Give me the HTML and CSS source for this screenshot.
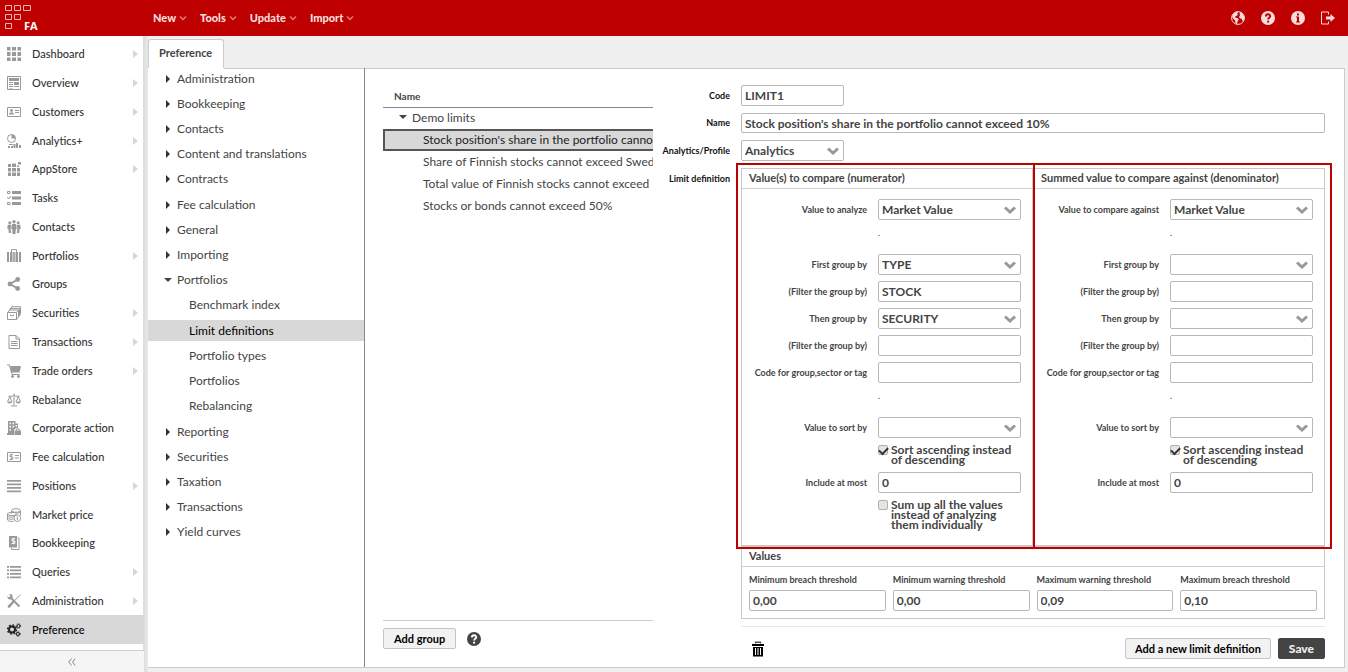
FILE: index.html
```html
<!DOCTYPE html>
<html lang="en">
<head>
<meta charset="utf-8">
<title>FA - Preference</title>
<link rel="stylesheet" href="styles.css">
</head>
<body>
<svg class="defs" aria-hidden="true">
  <symbol id="chev" viewBox="0 0 12 8"><path d="M1 1.5 6 6 11 1.5" fill="none" stroke="currentColor" stroke-width="3"/></symbol>
  <symbol id="thin" viewBox="0 0 8 6"><path d="M1 1.5 4 4.5 7 1.5" fill="none" stroke="currentColor" stroke-width="1.5"/></symbol>
  <symbol id="help" viewBox="0 0 14 14"><circle cx="7" cy="7" r="7" fill="currentColor"/><path class="cut" d="M4.9 5.4C4.9 2.6 9.2 2.7 9.2 5.2 9.2 6.8 7.1 6.8 7.1 8.6" fill="none" stroke-width="1.9"/><circle class="cutfill" cx="7.1" cy="10.7" r="1.1"/></symbol>
</svg>
<header class="topbar">
  <svg class="logo" viewBox="0 0 36 28" role="img" aria-label="FA"><g fill="none" stroke="#efb4b4"><path d="M.5 1.5h6v5h-6zM9.500 1.500h6v5h-6zM18.500 1.500h7v5h-7zM.5 10.500h6v5h-6zM9.500 10.500h6v5h-6zM.5 19.500h6v5h-6z"/></g><text x="19" y="26">FA</text></svg>
  <nav class="menus">
    <button>New <svg><use href="#thin"/></svg></button>
    <button>Tools <svg><use href="#thin"/></svg></button>
    <button>Update <svg><use href="#thin"/></svg></button>
    <button>Import <svg><use href="#thin"/></svg></button>
  </nav>
  <div class="tools">
    <button aria-label="Language"><svg viewBox="0 0 14 14"><circle cx="7" cy="7" r="6.400" fill="none" stroke="currentColor"/><path fill="currentColor" d="M1 5 3 2l3-1.500 1.500.8L6 2.500l1 1L5.500 5 4 5.500l.5 1.200L6.500 7l1.300 1.500L6.500 10.500l-.5 2.700-1.500-1-.5-3L2 7.500zM8.500 2 10 1l2 2 1.500 3-.5 3.500-1.500.5-.8-2.200L9 7.500 8 6l1-1.700z"/></svg></button>
    <button aria-label="Help"><svg><use href="#help"/></svg></button>
    <button aria-label="Information"><svg viewBox="0 0 14 14"><circle cx="7" cy="7" r="7" fill="currentColor"/><path fill="#be0000" d="M6 2.500h2v2H6zM5 5.500h3v5h1v1H5v-1h1v-4H5z"/></svg></button>
    <button aria-label="Log out"><svg viewBox="0 0 14 14"><path d="M7.500 3.500V1h-7v12h7v-2.500" fill="none" stroke="currentColor"/><path d="M5 5.500h4.500V3L14 7l-4.500 4V8.500H5z" fill="currentColor"/></svg></button>
  </div>
</header>
<div class="shell">
  <aside class="sidebar">
    <nav class="nav">
      <a class="more" href="#"><svg viewBox="0 0 14 14"><path d="M0 0h3.500v3.500H0zM5 0h4v3.500H5zM10.500 0H14v3.500h-3.500zM0 5h3.500v4H0zM5 5h4v4H5zM10.500 5H14v4h-3.500zM0 10.500h3.500V14H0zM5 10.500h4V14H5zM10.500 10.500H14V14h-3.500z"/></svg>Dashboard</a>
      <a class="more" href="#"><svg viewBox="0 0 14 14"><path class="ln" d="M.5.5h13v13H.5z"/><path d="M2 2h10v3H2zM2 6h4v1H2zM7 6h5v3H7zM2 8h4v1H2zM2 10h4v1H2zM7 10h5v1H7zM2 12h4v.6H2z"/></svg>Overview</a>
      <a class="more" href="#"><svg viewBox="0 0 14 14"><path class="ln" d="M.5 2.500h13v9H.5z"/><circle cx="4.500" cy="5.500" r="1.400"/><path d="M2 9.500c0-3 5-3 5 0zM8 5h4v1H8zM8 7h4v1H8z"/></svg>Customers</a>
      <a class="more" href="#"><svg viewBox="0 0 14 14"><circle class="ln" cx="4.500" cy="4.500" r="4"/><path d="M4.500 4.500V.5a4 4 0 0 1 4 4zM1 12h2v2H1zM4 12h2v2H4zM6.500 10h2v4h-2zM9 9h2v5H9zM12 11h2v3h-2zM2 10h4v1H2z"/></svg>Analytics+</a>
      <a class="more" href="#"><svg viewBox="0 0 14 14"><path d="M1 2h3v3H1zM5 1.500h4V5H5zM11 0h3v2.500h-3zM1 6h3v3.500H1zM5 6h4v3.500H5zM10 6h3v3.500h-3zM1 10.500h3V14H1zM5 10.500h4V14H5zM10 10.500h3V14h-3zM10 3.500h2V5h-2z"/></svg>AppStore</a>
      <a href="#"><svg viewBox="0 0 14 14"><path d="M5 0h9v3H5zM5 5.500h9v3H5zM5 11h9v3H5z"/><path class="ln" d="M.5.5h2.500v2H.5zM.5 11.500h2.500v2H.5zM.5 6l1 2 2.500-3"/></svg>Tasks</a>
      <a href="#"><svg viewBox="0 0 14 14"><circle cx="7" cy="1.700" r="1.700"/><circle cx="2.800" cy="2.700" r="1.500"/><circle cx="11.200" cy="2.700" r="1.500"/><path d="M5 4h4l.8 5-1 .3L8.500 14h-3l-.3-4.700-1-.3zM.8 4.700h3.400L3.600 9l.6 4H1.800l-.4-4-1.200-.4zM9.800 4.700h3.400l.6 4-1.200.3-.4 4H9.800l.6-4z"/></svg>Contacts</a>
      <a class="more" href="#"><svg viewBox="0 0 14 14"><path class="ln" d="M4.500 3V.6h5V3"/><path d="M0 3h2v10H0zM3 3h2.500v10H3zM6.200 3h1.600v10H6.200zM8.500 3H11v10H8.500zM12 3h2v10h-2z"/></svg>Portfolios</a>
      <a href="#"><svg viewBox="0 0 14 14"><circle cx="10.700" cy="2.500" r="2.400"/><circle cx="3" cy="7" r="2.400"/><circle cx="10.700" cy="11.500" r="2.400"/><path class="ln thick" d="M10.700 2.500 3 7l7.700 4.500"/></svg>Groups</a>
      <a class="more" href="#"><svg viewBox="0 0 14 14"><path class="ln" d="M.5 6.500h9v7h-9zM.5 6.500 3 4h8.500v7L9.500 13.500M9.500 6.500l2-2.500M3 4V2.500h8.500l1.200-.2v6.500M4.500 2.500V.7H13.500v7M3.500 8.500v1.200h3V8.500"/><path d="m11.500 4 2-3v8l-2 2.500z"/></svg>Securities</a>
      <a class="more" href="#"><svg viewBox="0 0 14 14"><path class="ln" d="M2 .5h7l3.500 3.500v9.500H2zM9 .5V4h3.500"/><path d="M4 6h6.500v1H4zM4 8h6.500v1H4zM4 10h6.500v1H4z"/></svg>Transactions</a>
      <a class="more" href="#"><svg viewBox="0 0 14 14"><path d="M3 2h11l-1.500 6.500H4.500z"/><path class="ln" d="M0 .8h2.300L5 10.500h7.500"/><circle cx="5.500" cy="12.500" r="1.400"/><circle cx="11.500" cy="12.500" r="1.400"/></svg>Trade orders</a>
      <a href="#"><svg viewBox="0 0 14 14"><path class="ln" d="M7 .5v12M1.500 3.200h4L7 2l1.500 1.200h4M2.800 3.500.7 8.500M2.800 3.500l2 5M11.200 3.500l-2 5M11.200 3.500l2.100 5"/><path d="M0 8.500h5.500C5 11 .5 11 0 8.500zM8.500 8.500H14c-.5 2.500-5 2.500-5.500 0zM4 12.500h6v1H4z"/></svg>Rebalance</a>
      <a href="#"><svg viewBox="0 0 14 14"><path fill-rule="evenodd" d="M1 13V0h7.500v2.500H11V7H8.500v1.500H7V13zM2.500 1.500v1.700H4V1.500zM5.500 1.500v1.700H7V1.500zM2.500 4.700v1.700H4V4.700zM5.500 4.700v1.700H7V4.700zM2.500 8v1.500H4V8zM8.500 4v1.500H10V4z"/><path d="M0 12h7v2H0zM7.500 9.500h6.500V14H7.500z"/><path class="ln" d="M9.500 9.500V8h2.700v1.500"/></svg>Corporate action</a>
      <a href="#"><svg viewBox="0 0 14 14"><path class="ln" d="M.5 2.500h13v9H.5z"/><path d="M8 5h4v1H8zM8 7.500h4v1H8z"/><text x="2" y="10">$</text></svg>Fee calculation</a>
      <a class="more" href="#"><svg viewBox="0 0 14 14"><path d="M0 1h14v1.700H0zM0 4.500h14v1.700H0zM0 8h14v1.700H0zM0 11.500h14v1.700H0z"/></svg>Positions</a>
      <a href="#"><svg viewBox="0 0 14 14"><g class="ln"><ellipse cx="9" cy="2.500" rx="4.500" ry="1.800"/><path d="M4.500 2.500v3M13.500 2.500v5"/><ellipse cx="5" cy="6" rx="4.500" ry="1.600"/><path d="M.5 6v6c1 1.500 4.500 1.700 6 1.200M.5 8c1 1.400 5 1.500 6.500.8M.5 10c1 1.400 4.500 1.500 6 1M9.500 5c2 0 3.500-.5 4-1.200"/><circle cx="10.300" cy="10.200" r="3.300"/><path d="M10.300 8.500v3.500"/></g></svg>Market price</a>
      <a href="#"><svg viewBox="0 0 14 14"><path d="M2 0h8v11.500H2z"/><path class="ln" d="M10.500 2h1.500v11.500H4.500V12"/><text class="inv" x="4" y="8">$</text></svg>Bookkeeping</a>
      <a class="more" href="#"><svg viewBox="0 0 14 14"><path d="M0 1h2v1.700H0zM3 1h11v1.700H3zM0 4.500h2v1.700H0zM3 4.500h11v1.700H3zM0 8h2v1.700H0zM3 8h11v1.700H3zM0 11.500h2v1.700H0zM3 11.500h11v1.700H3z"/></svg>Queries</a>
      <a class="more" href="#"><svg viewBox="0 0 14 14"><path class="ln thick" d="M3.500 3.500 12.500 12.500"/><path class="ln" d="M13.500.8 7 7.200"/><path d="M0 2 2 3.500 3.500 2 2 0c3-.3 4 1.500 3.500 3.500S2.500 6 1 4.800zM6 6.500l1.500 1.500-4.500 5.500c-1.500 1-3-.5-2-2z"/></svg>Administration</a>
      <a class="active" href="#" aria-current="page"><svg viewBox="0 0 14 14"><circle class="ln cog" cx="5" cy="6.500" r="3"/><circle class="ln cogt" cx="5" cy="6.500" r="4.500"/><circle class="ln sm" cx="11.500" cy="3" r="1.500"/><circle class="ln smt" cx="11.500" cy="3" r="2.200"/><circle class="ln sm" cx="11" cy="11" r="1.500"/><circle class="ln smt" cx="11" cy="11" r="2.200"/></svg>Preference</a>
    </nav>
    <button class="collapse" aria-label="Collapse menu"><svg viewBox="0 0 8 8"><path d="M3.500.5.8 4l2.700 3.500M7.200.5 4.500 4l2.700 3.500" fill="none" stroke="#888"/></svg></button>
  </aside>
  <main class="main">
    <div class="tabs"><button class="tab">Preference</button></div>
    <div class="content">
      <ul class="tree">
        <li class="closed"><a href="#">Administration</a></li>
        <li class="closed"><a href="#">Bookkeeping</a></li>
        <li class="closed"><a href="#">Contacts</a></li>
        <li class="closed"><a href="#">Content and translations</a></li>
        <li class="closed"><a href="#">Contracts</a></li>
        <li class="closed"><a href="#">Fee calculation</a></li>
        <li class="closed"><a href="#">General</a></li>
        <li class="closed"><a href="#">Importing</a></li>
        <li class="open"><a href="#">Portfolios</a></li>
        <li class="leaf"><a href="#">Benchmark index</a></li>
        <li class="leaf current"><a href="#">Limit definitions</a></li>
        <li class="leaf"><a href="#">Portfolio types</a></li>
        <li class="leaf"><a href="#">Portfolios</a></li>
        <li class="leaf"><a href="#">Rebalancing</a></li>
        <li class="closed"><a href="#">Reporting</a></li>
        <li class="closed"><a href="#">Securities</a></li>
        <li class="closed"><a href="#">Taxation</a></li>
        <li class="closed"><a href="#">Transactions</a></li>
        <li class="closed"><a href="#">Yield curves</a></li>
      </ul>
      <section class="limits">
        <div class="list">
          <table>
            <thead><tr><th>Name</th></tr></thead>
            <tbody>
              <tr class="group"><td>Demo limits</td></tr>
              <tr class="selected"><td>Stock position's share in the portfolio cannot exceed 10%</td></tr>
              <tr><td>Share of Finnish stocks cannot exceed Swedish</td></tr>
              <tr><td>Total value of Finnish stocks cannot exceed 10%</td></tr>
              <tr><td>Stocks or bonds cannot exceed 50%</td></tr>
            </tbody>
          </table>
        </div>
        <div class="listbar">
          <button class="btn">Add group</button>
          <button class="icon dark" aria-label="Help"><svg><use href="#help"/></svg></button>
        </div>
      </section>
      <form class="form">
        <div class="fields">
          <label for="code">Code</label>
          <input class="short" id="code" value="LIMIT1">
          <label for="name">Name</label>
          <input class="wide" id="name" value="Stock position's share in the portfolio cannot exceed 10%">
          <label for="profile">Analytics/Profile</label>
          <span class="sel short"><select id="profile"><option>Analytics</option></select><svg><use href="#chev"/></svg></span>
          <span class="lbl">Limit definition</span>
          <div class="definition">
            <div class="pair">
              <fieldset class="side first">
                <h2>Value(s) to compare (numerator)</h2>
                <div class="rows">
                  <label for="a1">Value to analyze</label><span class="sel"><select id="a1"><option>Market Value</option></select><svg><use href="#chev"/></svg></span>
                  <span class="dot">.</span>
                  <label for="a2">First group by</label><span class="sel"><select id="a2"><option>TYPE</option></select><svg><use href="#chev"/></svg></span>
                  <label for="a3">(Filter the group by)</label><input id="a3" value="STOCK">
                  <label for="a4">Then group by</label><span class="sel"><select id="a4"><option>SECURITY</option></select><svg><use href="#chev"/></svg></span>
                  <label for="a5">(Filter the group by)</label><input id="a5">
                  <label for="a6">Code for group,sector or tag</label><input id="a6">
                  <span class="dot">.</span>
                  <label for="a7">Value to sort by</label><span class="sel"><select id="a7"><option></option></select><svg><use href="#chev"/></svg></span>
                  <label class="check"><input type="checkbox" checked><span>Sort ascending instead of descending</span></label>
                  <label for="a8">Include at most</label><input id="a8" value="0">
                  <label class="check"><input type="checkbox"><span>Sum up all the values instead of analyzing them individually</span></label>
                </div>
              </fieldset>
              <fieldset class="side second">
                <h2>Summed value to compare against (denominator)</h2>
                <div class="rows">
                  <label for="b1">Value to compare against</label><span class="sel"><select id="b1"><option>Market Value</option></select><svg><use href="#chev"/></svg></span>
                  <span class="dot">.</span>
                  <label for="b2">First group by</label><span class="sel"><select id="b2"><option></option></select><svg><use href="#chev"/></svg></span>
                  <label for="b3">(Filter the group by)</label><input id="b3">
                  <label for="b4">Then group by</label><span class="sel"><select id="b4"><option></option></select><svg><use href="#chev"/></svg></span>
                  <label for="b5">(Filter the group by)</label><input id="b5">
                  <label for="b6">Code for group,sector or tag</label><input id="b6">
                  <span class="dot">.</span>
                  <label for="b7">Value to sort by</label><span class="sel"><select id="b7"><option></option></select><svg><use href="#chev"/></svg></span>
                  <label class="check"><input type="checkbox" checked><span>Sort ascending instead of descending</span></label>
                  <label for="b8">Include at most</label><input id="b8" value="0">
                </div>
              </fieldset>
            </div>
            <fieldset class="values">
              <h2>Values</h2>
              <div class="thresholds">
                <label>Minimum breach threshold<input value="0,00"></label>
                <label>Minimum warning threshold<input value="0,00"></label>
                <label>Maximum warning threshold<input value="0,09"></label>
                <label>Maximum breach threshold<input value="0,10"></label>
              </div>
            </fieldset>
            <div class="actions">
              <button type="button" class="icon trash" aria-label="Delete"><svg viewBox="0 0 12 16"><path d="M3.500 2.500V1.300h5v1.200" fill="none" stroke="#555" stroke-width="1.400"/><path d="M0 3h12v2H0z"/><path fill-rule="evenodd" d="M1 6h10v9.500H1zM3 7v7h1V7zM5.500 7v7h1V7zM8 7v7h1V7z"/></svg></button>
              <button type="button" class="btn push">Add a new limit definition</button>
              <button type="button" class="btn save">Save</button>
            </div>
          </div>
        </div>
      </form>
    </div>
  </main>
</div>
</body>
</html>
```

FILE: styles.css
```css
* { box-sizing: border-box; }
body {
  --cut: #be0000;
  margin: 0;
  min-height: 100vh;
  display: flex;
  flex-direction: column;
  font: 12px/16px Lato, "Open Sans", sans-serif;
  color: #444;
  background: #f0f0f0;
}
button, input, select { font: inherit; color: inherit; margin: 0; }
button { border: 0; background: none; padding: 0; cursor: pointer; }
a { color: inherit; text-decoration: none; }
svg { display: block; }
.defs { position: absolute; width: 0; height: 0; }

/* top bar */
.topbar {
  display: flex;
  align-items: center;
  height: 36px;
  padding: 0 13px 0 5px;
  background: #be0000;
  color: #f8dcdc;
}
.logo { width: 36px; height: 28px; }
.logo text { font: bold 11px "Open Sans", sans-serif; fill: #fff; }
.menus { display: flex; gap: 13px; margin-left: 112px; }
.menus button { display: flex; align-items: center; gap: 3px; font-size: 11px; font-weight: 900; }
.menus svg { width: 8px; height: 6px; color: #e27c7c; }
.tools { display: flex; gap: 16px; margin-left: auto; }
.tools svg { width: 14px; height: 14px; }
.cut { stroke: var(--cut); }
.cutfill { fill: var(--cut); }

/* side navigation */
.shell { flex: 1; display: flex; }
.sidebar {
  flex: none;
  width: 148px;
  display: flex;
  flex-direction: column;
  padding-right: 4px;
  background: linear-gradient(to right, #fff 143px, #dcdcdc 143px, #e8e8e8 148px);
}
.nav { flex: 1; display: grid; grid-auto-rows: 1fr; padding: 4px 0 6px; }
.nav a {
  display: flex;
  align-items: center;
  gap: 11px;
  padding: 0 6px 0 7px;
  font-size: 11px;
  font-weight: 500;
  color: #333;
}
.nav svg { width: 14px; height: 14px; fill: #999; }
.nav text { font: bold 8px Lato, sans-serif; }
.nav .inv { fill: #fff; }
.ln { fill: none; stroke: #999; stroke-width: 1; }
.thick { stroke-width: 2; }
.more::after {
  content: "";
  margin-left: auto;
  border: solid transparent;
  border-width: 4px 0 4px 5px;
  border-left-color: #d6d6d6;
}
.nav .active { background: #d8d8d8; color: #000; }
.active .ln { stroke: #222; }
.active .cog { stroke-width: 2; }
.active .cogt { stroke-width: 1.5; stroke-dasharray: 1.8 1.7; }
.active .smt { stroke-dasharray: 1 .9; }
.collapse {
  display: flex;
  align-items: center;
  justify-content: center;
  height: 22px;
  background: #f5f5f5;
  border-top: 1px solid #d0d0d0;
}
.collapse svg { width: 8px; height: 8px; }

/* main area */
.main { flex: 1; min-width: 0; display: flex; flex-direction: column; padding: 3px 3px 4px 0; }
.tabs { display: flex; }
.tab {
  height: 29px;
  padding: 0 11px 2px 10px;
  background: #fff;
  border: 1px solid #ccc;
  border-bottom: 0;
  border-radius: 3px 3px 0 0;
  font-size: 11px;
  font-weight: 700;
}
.content {
  flex: 1;
  display: flex;
  background: #fff;
  border: 1px solid #ccc;
  border-top: 0;
  border-left: 0;
  background-image: linear-gradient(#ccc, #ccc);
  background-size: calc(100% - 76px) 1px;
  background-position: right top;
  background-repeat: no-repeat;
}
.tree {
  flex: none;
  width: 217px;
  display: flex;
  flex-direction: column;
  justify-content: space-between;
  margin: 0;
  padding: 0 0 124px;
  list-style: none;
  border-right: 1px solid #888;
}
.tree li { display: flex; align-items: center; height: 21px; padding-left: 18px; }
.closed::before, .open::before, .group td::before { content: ""; border: solid transparent; }
.closed::before { border-width: 4px 0 4px 4px; border-left-color: #333; margin-right: 7px; }
.open::before { border-width: 4px 4px 0; border-top-color: #444; margin: 0 5px 0 -2px; }
.tree .leaf { padding-left: 41px; }
.tree .current { background: #d8d8d8; color: #000; }

/* limit list */
.limits {
  flex: 0 0 288px;
  min-width: 0;
  display: flex;
  flex-direction: column;
  padding: 17px 0 18px 18px;
}
.list { flex: 1; min-width: 0; border-bottom: 1px solid #ccc; }
table { border-collapse: collapse; table-layout: fixed; width: 100%; }
th {
  height: 22px;
  padding: 0 11px;
  text-align: left;
  font-size: 10px;
  font-weight: 700;
  border-bottom: 1px solid #888;
}
td { height: 22px; padding: 0 0 0 40px; white-space: nowrap; overflow: hidden; }
.group td { padding-left: 16px; }
.group td::before {
  display: inline-block;
  border-width: 4px 4px 0;
  border-top-color: #444;
  margin-right: 5px;
  vertical-align: 3px;
}
.selected td {
  background: #d8d8d8;
  color: #222;
  box-shadow: inset 2px 0 #555, inset 0 2px #555, inset 0 -2px #555;
}
.listbar { display: flex; align-items: center; gap: 11px; padding-top: 7px; }
.btn {
  height: 21px;
  padding: 0 10px;
  background: #f2f2f2;
  border: 1px solid #c4c4c4;
  border-radius: 2px;
  color: #000;
  font-size: 11px;
  font-weight: 700;
  line-height: 16px;
}
.icon svg { width: 14px; height: 14px; }
.dark { color: #444; --cut: #fff; }

/* edit form */
.form { flex: 1; min-width: 0; padding: 17px 19px 8px 9px; }
.fields {
  display: grid;
  grid-template-columns: 68px minmax(0, 1fr);
  column-gap: 11px;
  row-gap: 7px;
  align-items: center;
}
.fields label, .lbl { font-size: 9px; font-weight: 700; line-height: 12px; text-align: right; white-space: nowrap; justify-self: end; }
.fields > label, .lbl { color: #111; }
.lbl { align-self: start; padding-top: 5px; }
input:not([type]), select {
  display: block;
  width: 100%;
  height: 21px;
  padding: 0 3px;
  background: #fff;
  border: 1px solid #b8b8b8;
  border-radius: 2px;
  font-size: 12px;
  font-weight: 700;
}
.fields > input.wide { height: 20px; }
.fields > .short { width: 103px; }
.sel { position: relative; display: block; }
select { appearance: none; }
.sel svg { position: absolute; right: 5px; top: 7px; width: 12px; height: 8px; color: #999; pointer-events: none; }
fieldset { margin: 0; padding: 0; min-width: 0; border: 1px solid #c8c8c8; }
h2 {
  margin: 0;
  padding: 0 7px 1px;
  font-size: 11px;
  font-weight: 700;
  line-height: 18px;
  border-bottom: 1px solid #d0d0d0;
}
.pair { display: grid; grid-template-columns: 1fr 1fr; }
.side { position: relative; border-bottom-width: 2px; }
.second { border-left: 0; }
.second h2 { padding-left: 8px; }
.side::after { content: ""; position: absolute; border: 2px solid #be0000; pointer-events: none; }
.first::after { inset: -6px -3px -4px -6px; }
.second::after { inset: -6px -8px -4px 0; }
.rows {
  display: grid;
  grid-template-columns: 1fr 143px;
  grid-auto-rows: minmax(27px, auto);
  column-gap: 11px;
  align-items: center;
  padding: 7px 11px 11px 0;
}
.dot { grid-column: 2; font-size: 9px; line-height: 20px; height: 28px; }
.rows .check {
  grid-column: 2;
  display: flex;
  gap: 3px;
  justify-self: start;
  padding: 4px 0;
  font-size: 12px;
  line-height: 10px;
  text-align: left;
  white-space: normal;
}
input[type="checkbox"] {
  flex: none;
  appearance: none;
  width: 10px;
  height: 10px;
  margin: 0;
  border: 1px solid #b0b0b0;
  border-radius: 2px;
  background: #e4e4e4;
  display: grid;
  place-items: center;
}
input[type="checkbox"]:checked::before {
  content: "";
  width: 7px;
  height: 4px;
  border: solid #333;
  border-width: 0 0 2px 2px;
  transform: rotate(-45deg);
}
.values { border-top: 0; }
.thresholds { display: grid; grid-template-columns: repeat(4, 1fr); gap: 7px; padding: 7px; }
.fields .thresholds label { justify-self: stretch; text-align: left; }
.thresholds input { margin-top: 4px; }
.actions {
  display: flex;
  align-items: center;
  gap: 7px;
  margin-top: 7px;
  padding: 11px 0 0 11px;
  border-top: 1px solid #e8e8e8;
}
.trash svg { width: 12px; height: 16px; }
.push { margin-left: auto; padding: 0 9px; }
.save { background: #444; border-color: #444; color: #eee; font-size: 12px; font-weight: 900; }
```
